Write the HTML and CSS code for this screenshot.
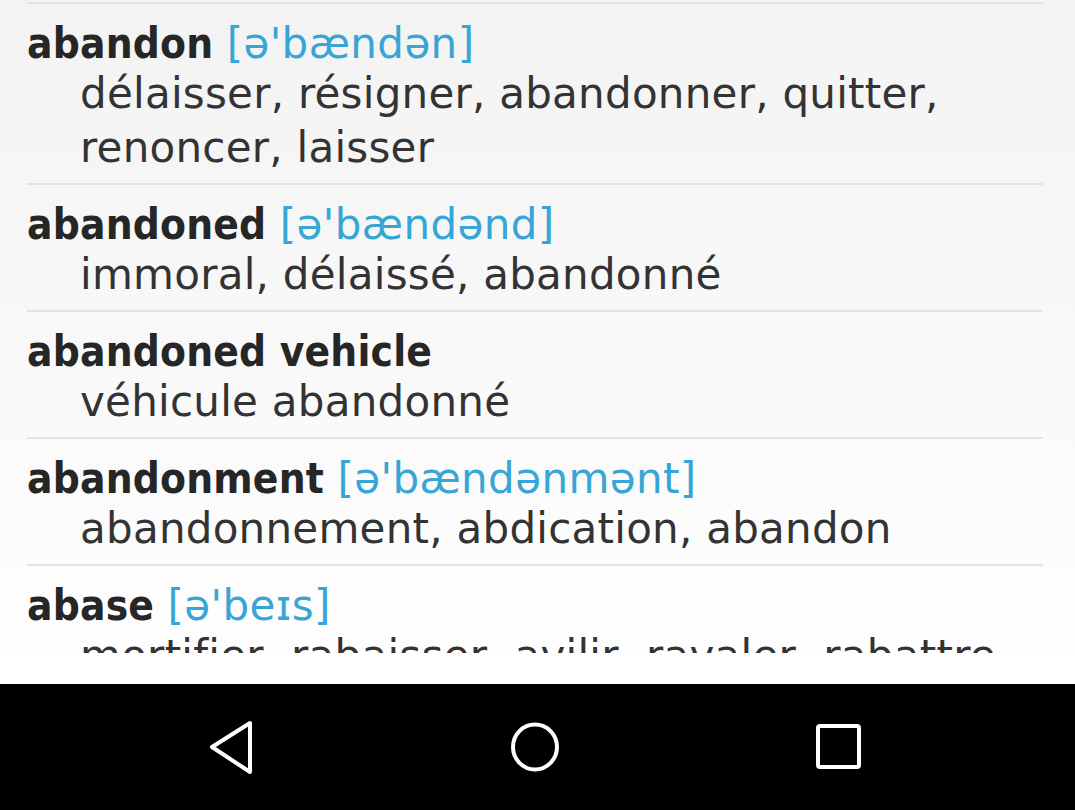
FILE: index.html
```html
<!DOCTYPE html>
<html lang="en">
<head>
<meta charset="utf-8">
<title>Dictionary</title>
<link rel="stylesheet" href="styles.css">
</head>
<body>
<div class="screen">
  <div class="list">
    <div class="entry">
      <div class="head"><span class="word">abandon</span> <span class="phon">[ə'bændən]</span></div>
      <div class="def">délaisser, résigner, abandonner, quitter, renoncer, laisser</div>
    </div>
    <div class="entry">
      <div class="head"><span class="word">abandoned</span> <span class="phon">[ə'bændənd]</span></div>
      <div class="def">immoral, délaissé, abandonné</div>
    </div>
    <div class="entry">
      <div class="head"><span class="word">abandoned vehicle</span></div>
      <div class="def">véhicule abandonné</div>
    </div>
    <div class="entry">
      <div class="head"><span class="word">abandonment</span> <span class="phon">[ə'bændənmənt]</span></div>
      <div class="def">abandonnement, abdication, abandon</div>
    </div>
    <div class="entry">
      <div class="head"><span class="word">abase</span> <span class="phon">[ə'beɪs]</span></div>
      <div class="def">mortifier, rabaisser, avilir, ravaler, rabattre</div>
    </div>
  </div>
  <div class="gap"></div>
  <nav class="navbar">
    <div class="navbtn">
      <svg width="60" height="60" viewBox="0 0 60 60"><polygon points="49,6 11,30 49,55" fill="none" stroke="#fff" stroke-width="4" stroke-linejoin="round"/></svg>
    </div>
    <div class="navbtn">
      <svg width="60" height="60" viewBox="0 0 60 60"><ellipse cx="30" cy="30" rx="22" ry="22.5" fill="none" stroke="#fff" stroke-width="4"/></svg>
    </div>
    <div class="navbtn">
      <svg width="60" height="60" viewBox="0 0 60 60"><rect x="9" y="9" width="41" height="41" rx="2" fill="none" stroke="#fff" stroke-width="4"/></svg>
    </div>
  </nav>
</div>
</body>
</html>
```

FILE: styles.css
```css
html, body {
  margin: 0;
  padding: 0;
  background: #fff;
}

.screen {
  width: 1075px;
  height: 810px;
  display: flex;
  flex-direction: column;
  overflow: hidden;
}

.list {
  flex: 0 0 653px;
  overflow: hidden;
  padding: 2px 32px 0 27px;
  box-sizing: border-box;
  background: linear-gradient(to bottom, #f3f3f3 0%, #f8f8f8 50%, #fefefe 100%);
}

.entry {
  border-top: 2px solid #e3e3e3;
  padding: 17px 0 8px 0;
}

.head {
  font-family: "DejaVu Sans", sans-serif;
  font-size: 42px;
  line-height: 46px;
  white-space: nowrap;
}

.word {
  font-family: "DejaVu Sans Condensed", "DejaVu Sans", sans-serif;
  font-weight: bold;
  font-stretch: semi-condensed;
  color: #262626;
  letter-spacing: 0.2px;
}

.phon {
  color: #37a5d5;
  letter-spacing: 0.4px;
}

.def {
  font-family: "DejaVu Sans", sans-serif;
  font-size: 42px;
  line-height: 54px;
  color: #333;
  padding-left: 53px;
  letter-spacing: 0.25px;
}

.gap {
  flex: 0 0 31px;
  background: #fff;
}

.navbar {
  flex: 1 1 auto;
  background: #000;
  display: flex;
  justify-content: center;
  align-items: center;
  gap: 184px;
  padding-right: 6px;
}

.navbtn {
  width: 120px;
  display: flex;
  justify-content: center;
  align-items: center;
}

.navbtn svg {
  display: block;
}
```
